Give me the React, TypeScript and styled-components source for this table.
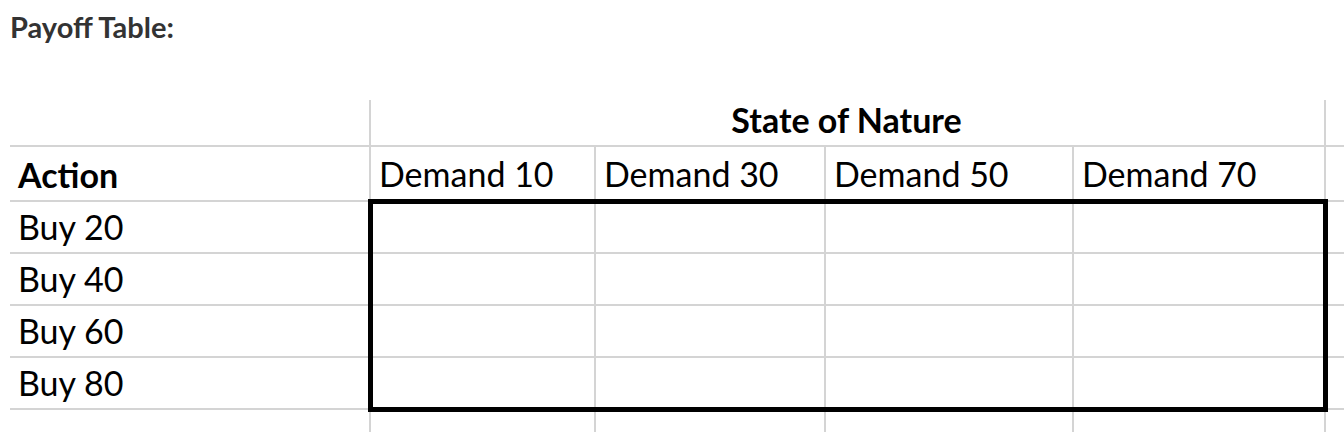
import styled, { createGlobalStyle } from 'styled-components';

const GlobalStyle = createGlobalStyle`
  html, body {
    margin: 0;
    padding: 0;
    background: #ffffff;
    overflow: hidden;
  }
`;

const Page = styled.div`
  width: 1344px;
  height: 432px;
  overflow: hidden;
  background: #ffffff;
`;

const Title = styled.h2`
  margin: 0;
  padding: 10px 0 0 10px;
  font-family: Lato, 'Open Sans', sans-serif;
  font-weight: 700;
  font-size: 29px;
  line-height: 34px;
  color: #333333;
`;

const Sheet = styled.table`
  margin: 56px 0 0 10px;
  border-collapse: collapse;
  table-layout: fixed;
  width: 1460px;
  font-family: Lato, 'Open Sans', sans-serif;
  font-size: 34px;
  color: #000000;
`;

const Row = styled.tr<{ $h: number }>`
  height: ${(p) => p.$h}px;
`;

const Cell = styled.td<{ $bold?: boolean; $center?: boolean; $noBottom?: boolean }>`
  padding: 0 10px 5px 8px;
  vertical-align: bottom;
  line-height: 40px;
  white-space: nowrap;
  overflow: hidden;
  font-weight: ${(p) => (p.$bold ? 700 : 400)};
  text-align: ${(p) => (p.$center ? 'center' : 'left')};
  border-right: 2px solid #d4d4d4;
  border-bottom: ${(p) => (p.$noBottom ? 'none' : '2px solid #d4d4d4')};
`;

// payoff cells, the outer ones carry the thick black frame
const Payoff = styled.td<{ $top?: boolean; $bottom?: boolean; $left?: boolean; $right?: boolean }>`
  padding: 0;
  border-right: ${(p) => (p.$right ? '5px solid #000' : '2px solid #d4d4d4')};
  border-bottom: ${(p) => (p.$bottom ? '5px solid #000' : '2px solid #d4d4d4')};
  border-top: ${(p) => (p.$top ? '5px solid #000' : '2px solid #d4d4d4')};
  border-left: ${(p) => (p.$left ? '5px solid #000' : '2px solid #d4d4d4')};
`;

const columns = [360, 225, 230, 248, 252, 145];
const demands = ['Demand 10', 'Demand 30', 'Demand 50', 'Demand 70'];
const actions = ['Buy 20', 'Buy 40', 'Buy 60', 'Buy 80'];

export default function App() {
  return (
    <Page>
      <GlobalStyle />
      <Title>Payoff Table:</Title>
      <Sheet>
        <colgroup>
          {columns.map((w, i) => (
            <col key={i} style={{ width: w }} />
          ))}
        </colgroup>
        <tbody>
          <Row $h={46}>
            <Cell />
            <Cell colSpan={4} $bold $center>
              State of Nature
            </Cell>
            <Cell />
          </Row>
          <Row $h={55}>
            <Cell $bold>Action</Cell>
            {demands.map((d) => (
              <Cell key={d}>{d}</Cell>
            ))}
            <Cell />
          </Row>
          {actions.map((a, r) => (
            <Row key={a} $h={52}>
              <Cell>{a}</Cell>
              {demands.map((d, c) => (
                <Payoff
                  key={d}
                  $top={r === 0}
                  $bottom={r === actions.length - 1}
                  $left={c === 0}
                  $right={c === demands.length - 1}
                />
              ))}
              <Cell />
            </Row>
          ))}
          <Row $h={40}>
            {columns.map((_, i) => (
              <Cell key={i} $noBottom />
            ))}
          </Row>
        </tbody>
      </Sheet>
    </Page>
  );
}
